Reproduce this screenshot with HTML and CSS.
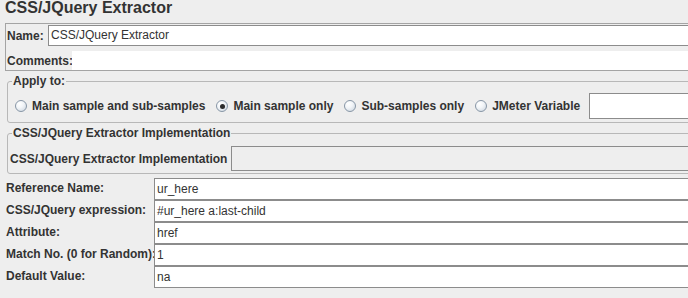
FILE: index.html
```html
<!DOCTYPE html>
<html>
<head>
    <meta charset="utf-8">
    <title>CSS/JQuery Extractor</title>
    <link rel="stylesheet" href="styles.css">
</head>
<body>
    <div class="page">
        <div class="title">CSS/JQuery Extractor</div>

        <!-- Name / comments -->
        <div class="name-panel">
            <div class="name-row">
                <span class="label name-label">Name:</span>
                <div class="field">CSS/JQuery Extractor</div>
            </div>
            <div class="comments-row">
                <span class="label comments-label">Comments:</span>
                <div class="comments-box"></div>
            </div>
        </div>

        <!-- Apply to -->
        <fieldset class="group apply-group">
            <legend>Apply to:</legend>
            <div class="apply-row">
                <span class="option"><span class="radio"></span>Main sample and sub-samples</span>
                <span class="option"><span class="radio checked"></span>Main sample only</span>
                <span class="option"><span class="radio"></span>Sub-samples only</span>
                <span class="option"><span class="radio"></span>JMeter Variable</span>
                <div class="field var-field"></div>
            </div>
        </fieldset>

        <!-- Implementation -->
        <fieldset class="group impl-group">
            <legend>CSS/JQuery Extractor Implementation</legend>
            <div class="impl-row">
                <span class="label impl-label">CSS/JQuery Extractor Implementation</span>
                <div class="field impl-field"></div>
            </div>
        </fieldset>

        <!-- Extractor params -->
        <div class="params">
            <div class="param-row">
                <span class="label param-label">Reference Name:</span>
                <div class="field param-field">ur_here</div>
            </div>
            <div class="param-row">
                <span class="label param-label">CSS/JQuery expression:</span>
                <div class="field param-field">#ur_here a:last-child</div>
            </div>
            <div class="param-row">
                <span class="label param-label">Attribute:</span>
                <div class="field param-field">href</div>
            </div>
            <div class="param-row">
                <span class="label param-label">Match No. (0 for Random):</span>
                <div class="field param-field">1</div>
            </div>
            <div class="param-row">
                <span class="label param-label">Default Value:</span>
                <div class="field param-field">na</div>
            </div>
        </div>
    </div>
</body>
</html>
```

FILE: styles.css
```css
* {
    box-sizing: border-box;
}

html, body {
    margin: 0;
    overflow: hidden;
}

body {
    background-color: #eeeeee;
    color: #333333;
    font-family: "Liberation Sans", Arial, sans-serif;
    font-size: 12px;
}

.page {
    width: 760px;
}

.title {
    margin: 0 0 0 5px;
    font-size: 16px;
    font-weight: bold;
    line-height: 16px;
}

.label {
    font-weight: bold;
    white-space: nowrap;
}

/* Text fields */
.field {
    flex: 1;
    background-color: #ffffff;
    border: 1px solid #8c8c8c;
    padding: 0 2px;
    line-height: 19px;
    white-space: nowrap;
}

/* Name panel */
.name-panel {
    margin: 7px 0 0 5px;
    border: 1px solid #a4a4a4;
    padding: 1px 0 0 1px;
}

.name-row {
    display: flex;
    align-items: center;
    height: 21px;
}

.name-label {
    width: 41px;
}

.comments-row {
    display: flex;
    align-items: center;
    height: 19px;
    margin-top: 5px;
}

.comments-label {
    width: 65px;
}

.comments-box {
    flex: 1;
    height: 19px;
    background-color: #ffffff;
}

/* Titled groups */
.group {
    margin: 3px 0 0 7px;
    border: 1px solid #b8b8b8;
    border-radius: 3px;
    min-width: 0;
}

.group legend {
    font-weight: bold;
    line-height: 14px;
    padding: 0 1px;
}

.apply-group {
    padding: 5px 0 3px 5px;
}

.apply-group legend {
    margin-left: -1px;
}

.apply-row {
    display: flex;
    align-items: center;
    height: 26px;
    padding-left: 2px;
}

.option {
    display: inline-flex;
    align-items: center;
    font-weight: bold;
    white-space: nowrap;
    margin-right: 11px;
}

.option:nth-child(4) {
    margin-right: 9px;
}

.radio {
    width: 12px;
    height: 12px;
    margin-right: 5px;
    border: 1px solid #8796a6;
    border-radius: 50%;
    background: radial-gradient(circle at 35% 30%, #ffffff 0%, #f2f5f8 40%, #c9d3de 100%);
    position: relative;
}

.radio.checked::after {
    content: "";
    position: absolute;
    left: 2.5px;
    top: 2.5px;
    width: 5px;
    height: 5px;
    border-radius: 50%;
    background-color: #2b2b2b;
}

.var-field {
    height: 26px;
}

.impl-group {
    padding: 6px 0 2px 2px;
}

.impl-group legend {
    margin-left: 2px;
}

.impl-row {
    display: flex;
    align-items: center;
    height: 25px;
}

.impl-label {
    width: 221px;
}

.impl-field {
    height: 25px;
    background-color: #eeeeee;
}

/* Parameter rows */
.params {
    margin: 4px 0 0 6px;
}

.param-row {
    display: flex;
    align-items: center;
    height: 22px;
}

.param-label {
    width: 148px;
    padding-bottom: 2px;
}

.param-field {
    height: 22px;
    line-height: 20px;
}
```
